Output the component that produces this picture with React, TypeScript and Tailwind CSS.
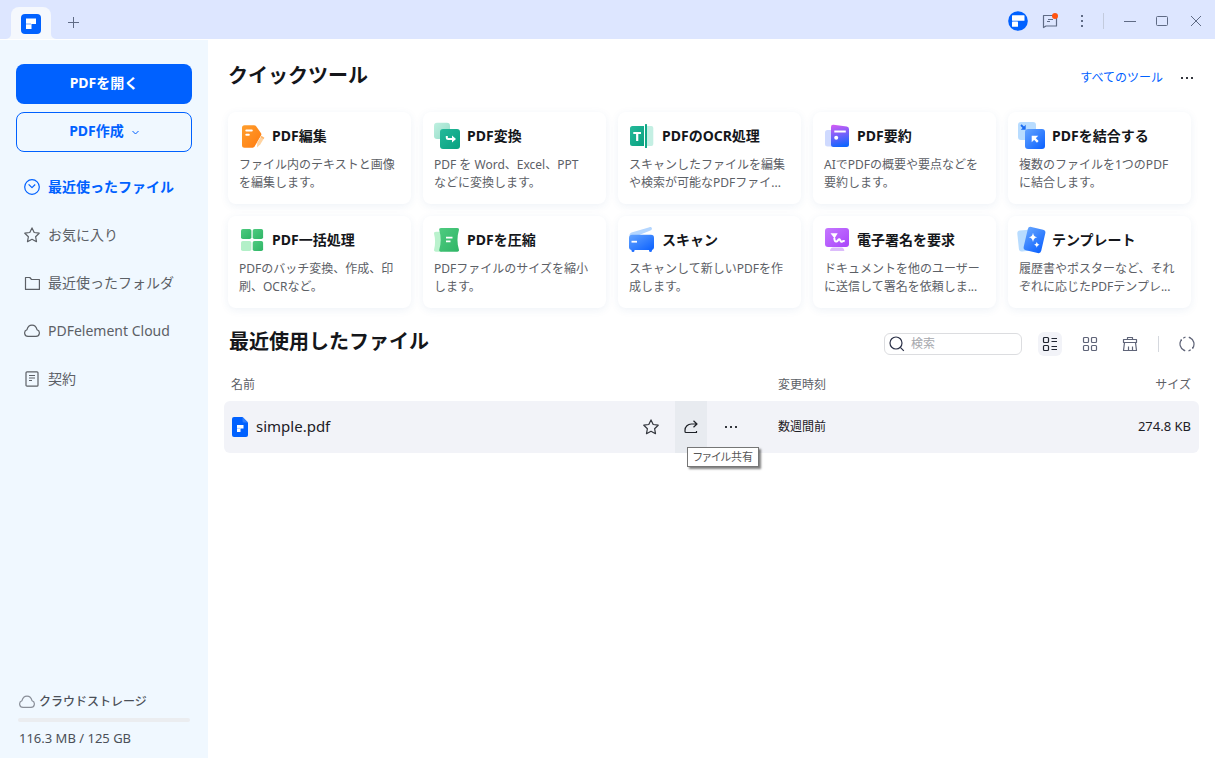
import type { ReactNode } from 'react';

type IconProps = { className?: string };

/* ---------- brand marks ---------- */

function BrandMark({ className }: IconProps) {
  return (
    <svg viewBox="0 0 20 20" className={className} aria-hidden>
      <rect width="20" height="20" rx="4" fill="#0061ff" />
      <path d="M5 4.5h10V10h-4.5v5H5z" fill="#fff" />
      <path d="M5 9h5v2H5z" fill="#b9d3ff" />
    </svg>
  );
}

function AvatarMark({ className }: IconProps) {
  return (
    <svg viewBox="0 0 20 20" className={className} aria-hidden>
      <circle cx="10" cy="10" r="9.8" fill="#0061ff" />
      <rect x="4" y="4.2" width="12.5" height="5.6" rx="0.6" fill="#fff" />
      <rect x="4" y="10.6" width="6" height="5.2" rx="0.6" fill="#fff" />
    </svg>
  );
}

function FileMark({ className }: IconProps) {
  return (
    <svg viewBox="0 0 16 20" className={className} aria-hidden>
      <path d="M2 0h8.5L16 5.5V18a2 2 0 0 1-2 2H2a2 2 0 0 1-2-2V2a2 2 0 0 1 2-2z" fill="#0061ff" />
      <path d="M10.5 0 16 5.5h-4a1.5 1.5 0 0 1-1.5-1.5z" fill="#2f7fff" />
      <path d="M5 8h6.5v3.500H8.500V15H5z" fill="#fff" />
      <path d="M5 10.800h3.500V12H5z" fill="#b9d3ff" />
    </svg>
  );
}

/* ---------- line icons ---------- */

function Line({ className, children }: IconProps & { children: ReactNode }) {
  return (
    <svg
      width="16"
      height="16"
      viewBox="0 0 16 16"
      fill="none"
      stroke="currentColor"
      strokeWidth="1.2"
      strokeLinejoin="round"
      className={`shrink-0 ${className ?? ''}`}
      aria-hidden
    >
      {children}
    </svg>
  );
}

const StarIcon = () => (
  <Line>
    <path d="M8 .9l2.200 4.600 5 .7-3.600 3.500.9 5L8 12.300l-4.500 2.400.9-5L.8 6.200l5-.7z" />
  </Line>
);

const CloudIcon = () => (
  <Line>
    <path d="M4 13.400a3.400 3.400 0 0 1-1.100-6.600C3.600 4 5.500 2.100 8 2.100s4.400 1.900 5.100 4.700A3.400 3.400 0 0 1 12 13.400z" />
  </Line>
);

const ClockIcon = () => (
  <Line>
    <circle cx="8" cy="8" r="7.3" />
    <path d="M4.600 5.300 8 8.700l3.200-3.200" />
  </Line>
);

const FolderIcon = () => (
  <Line>
    <path d="M1.500 2.500h4.300l1.700 2h7.900v9.900H1.500z" />
  </Line>
);

const ContractIcon = () => (
  <Line>
    <rect x="2" y="0.8" width="12" height="14.4" rx="1" />
    <path d="M5 4.500h6M5 7h6M5 9.500h3" strokeWidth="1" />
  </Line>
);

const DotsIcon = ({ className }: IconProps) => (
  <svg width="16" height="16" viewBox="0 0 16 16" fill="currentColor" className={className} aria-hidden>
    <path d="M2 7h2v2H2zM7 7h2v2H7zM12 7h2v2h-2z" />
  </svg>
);

/* ---------- tool icons ---------- */

function Art({ children }: { children: ReactNode }) {
  return (
    <svg width="28" height="28" viewBox="0 0 28 28" fill="none" className="shrink-0 overflow-visible" aria-hidden>
      {children}
    </svg>
  );
}

const Gradients = () => (
  <svg width="0" height="0" className="absolute" aria-hidden>
    <defs>
      <linearGradient id="g-orange" x1="0" y1="0" x2="1" y2="1">
        <stop stopColor="#ff9f2e" />
        <stop offset="1" stopColor="#ff7a0f" />
      </linearGradient>
      <linearGradient id="g-teal" x1="0" y1="0" x2="1" y2="1">
        <stop stopColor="#25b99a" />
        <stop offset="1" stopColor="#08a180" />
      </linearGradient>
      <linearGradient id="g-mint" x1="0" y1="0" x2="1" y2="1">
        <stop stopColor="#bff0e0" />
        <stop offset="1" stopColor="#93dcc8" />
      </linearGradient>
      <linearGradient id="g-green" x1="0" y1="0" x2="1" y2="1">
        <stop stopColor="#4fcb80" />
        <stop offset="1" stopColor="#2fb566" />
      </linearGradient>
      <linearGradient id="g-blue" x1="0" y1="0" x2="1" y2="1">
        <stop stopColor="#64a4ff" />
        <stop offset="1" stopColor="#0a60ff" />
      </linearGradient>
      <linearGradient id="g-ai" x1="0.3" y1="0" x2="0.5" y2="1">
        <stop stopColor="#cf5cf5" />
        <stop offset="1" stopColor="#0f66ff" />
      </linearGradient>
      <linearGradient id="g-purple" x1="0" y1="0" x2="1" y2="1">
        <stop stopColor="#c577ff" />
        <stop offset="1" stopColor="#a945fb" />
      </linearGradient>
    </defs>
  </svg>
);

const EditArt = () => (
  <Art>
    <path d="M5.500 3.300H15c1 0 1.700.4 2.300 1.200l4.600 6.400c.6.900.7 1.700.1 2.700l-6.400 11c-.5.800-1.100 1.100-2 1.100H5.500A2.500 2.500 0 0 1 3 23.200V5.800a2.500 2.500 0 0 1 2.500-2.500z" fill="url(#g-orange)" />
    <path d="M7.300 8.500h5.500M7.300 12.700h2.500" stroke="#fff" strokeWidth="2" strokeLinecap="round" />
    <path d="m18.300 20.500 3.700-6 3 1.800-3.600 6-3.400 3.200z" fill="#ffd3a1" />
    <path d="m22 14.500 3 1.800" stroke="#ffb568" strokeWidth="1.5" />
  </Art>
);

const ConvertArt = () => (
  <Art>
    <rect y="0.7" width="16" height="16.3" rx="3" fill="url(#g-mint)" />
    <rect x="6" y="7" width="20" height="20" rx="3" fill="url(#g-teal)" />
    <path d="M12.800 14v1.500c0 1 .5 1.500 1.500 1.500h5.200" stroke="#fff" strokeWidth="2" />
    <path d="m18 13.500 4 3.500-4 3.500z" fill="#fff" />
  </Art>
);

const OcrArt = () => (
  <Art>
    <path d="M3.500 4H15v20H3.500A2.500 2.500 0 0 1 1 21.500v-15A2.500 2.500 0 0 1 3.500 4z" fill="url(#g-teal)" />
    <path d="M18 4h4.300a2 2 0 0 1 2 2v16a2 2 0 0 1-2 2H18z" fill="#c4efe3" />
    <rect x="16" y="2" width="2" height="24" rx="0.5" fill="#10a987" />
    <path d="M4.300 11H12M8.200 11v8" stroke="#fff" strokeWidth="2.2" />
  </Art>
);

const SummaryArt = () => (
  <Art>
    <rect x="1" y="8" width="12" height="16.5" rx="2.5" fill="#cfdaff" />
    <path d="M9.600 2.700 22.700 4.500A2.600 2.600 0 0 1 25 7v15.500a2.500 2.500 0 0 1-2.500 2.500h-13A2.500 2.500 0 0 1 7 22.500V5a2.300 2.300 0 0 1 2.600-2.300z" fill="url(#g-ai)" />
    <path d="M10.300 9.500h11.500" stroke="#fff" strokeWidth="2" />
    <circle cx="12.2" cy="15.8" r="2" fill="#fff" />
  </Art>
);

const MergeArt = () => (
  <Art>
    <rect x="-1" width="18" height="18" rx="3" fill="#b8dcff" />
    <path d="m2 3 3.500 3.500" stroke="#1b6cf2" strokeWidth="1.8" />
    <path d="M6.700 2.800v4.900H1.800z" fill="#1b6cf2" />
    <rect x="6" y="7" width="20" height="20" rx="3" fill="url(#g-blue)" />
    <path d="m14.500 15.500 4.300 4.300" stroke="#fff" strokeWidth="2.4" />
    <path d="M12.700 20.300v-6.600h6.600z" fill="#fff" />
  </Art>
);

const BatchArt = () => (
  <Art>
    <rect x="2" y="3" width="10.4" height="10" rx="1.8" fill="url(#g-green)" />
    <rect x="13.7" y="3" width="10.4" height="10" rx="1.8" fill="url(#g-green)" />
    <rect x="2" y="15" width="10.4" height="10" rx="1.8" fill="#b3f0c8" />
    <rect x="13.7" y="15" width="10.4" height="10" rx="1.8" fill="url(#g-green)" />
  </Art>
);

const CompressArt = () => (
  <Art>
    <path d="M2 5.700h6v20H2c-1.500 0-2.200-.8-1.900-2.200 1.300-5 1.300-10.600 0-15.600C-.2 6.500.5 5.700 2 5.700z" fill="#baf2cd" />
    <path d="M7 2h16.200c1.400 0 2.100.8 1.700 2.200-1.900 6.500-1.900 12.800 0 19.300.4 1.400-.3 2.200-1.700 2.200H7c-1.400 0-2.100-.8-1.700-2.200 1.900-6.500 1.900-12.800 0-19.300C4.900 2.800 5.600 2 7 2z" fill="url(#g-green)" />
    <path d="M12 11.700h6.500M12 15.300h4.500" stroke="#fff" strokeWidth="1.8" />
  </Art>
);

const ScanArt = () => (
  <Art>
    <path d="M.5 9.500c0-1.500.6-2.500 2-3L20.500 1.200c2.200-.6 3.400 1.900 1.500 3L9 9.500z" fill="#b4d6ff" />
    <path d="M2 22h3.500v2.500a1.500 1.500 0 0 1-3 0zM20 22h3.500l-.5 2.500a1.500 1.500 0 0 1-3 0z" fill="#1e6dff" />
    <rect y="8.7" width="25" height="15.3" rx="3" fill="url(#g-blue)" />
    <path d="M2.500 15.700H8" stroke="#fff" strokeWidth="1.8" />
  </Art>
);

const SignArt = () => (
  <Art>
    <path d="M9 21.500h8.500c1.500 0 2.800 1.500 2.800 3.500H6c0-2 1.500-3.500 3-3.500z" fill="#dcbcfb" />
    <rect x="1" y="2" width="24" height="19" rx="3" fill="url(#g-purple)" />
    <path d="M6.500 7.200h7.200l-3.200 5.300z" fill="#fff" />
    <path d="M10.300 12c.2 3 .9 3.900 2.200 3.500 1.600-.5 1.700-2.600 2.900-2.200 1.200.4.800 2.400 2 2.500 1.200 0 1.200-1.200 3.300-.6" stroke="#fff" strokeWidth="2" />
  </Art>
);

const TemplateArt = () => (
  <Art>
    <rect x="-1" y="4" width="15" height="21" rx="3" transform="rotate(-6 7 14)" fill="#b8dcff" />
    <rect x="6.5" y="2" width="18" height="24" rx="3" transform="rotate(13 15.5 14)" fill="url(#g-blue)" />
    <path d="M14 6.700c.7 3 1.500 3.900 4.200 4.600-2.700.7-3.500 1.600-4.200 4.600-.7-3-1.500-3.900-4.200-4.600 2.700-.7 3.500-1.600 4.200-4.600zM17.800 15.700c.5 2 1 2.500 2.700 3-1.700.5-2.200 1-2.700 3-.5-2-1-2.500-2.700-3 1.700-.5 2.200-1 2.700-3z" fill="#fff" />
  </Art>
);

/* ---------- data ---------- */

const TOOLS = [
  { title: 'PDF編集', text: 'ファイル内のテキストと画像を編集します。', art: <EditArt /> },
  { title: 'PDF変換', text: 'PDF を Word、Excel、PPT\nなどに変換します。', art: <ConvertArt /> },
  { title: 'PDFのOCR処理', text: 'スキャンしたファイルを編集や検索が可能なPDFファイ...', art: <OcrArt /> },
  { title: 'PDF要約', text: 'AIでPDFの概要や要点などを要約します。', art: <SummaryArt /> },
  { title: 'PDFを結合する', text: '複数のファイルを1つのPDFに結合します。', art: <MergeArt /> },
  { title: 'PDF一括処理', text: 'PDFのバッチ変換、作成、印刷、OCRなど。', art: <BatchArt /> },
  { title: 'PDFを圧縮', text: 'PDFファイルのサイズを縮小します。', art: <CompressArt /> },
  { title: 'スキャン', text: 'スキャンして新しいPDFを作成します。', art: <ScanArt /> },
  { title: '電子署名を要求', text: 'ドキュメントを他のユーザーに送信して署名を依頼しま...', art: <SignArt /> },
  { title: 'テンプレート', text: '履歴書やポスターなど、それぞれに応じたPDFテンプレ...', art: <TemplateArt /> },
];

const NAV = [
  { label: '最近使ったファイル', icon: <ClockIcon />, active: true },
  { label: 'お気に入り', icon: <StarIcon /> },
  { label: '最近使ったフォルダ', icon: <FolderIcon /> },
  { label: 'PDFelement Cloud', icon: <CloudIcon /> },
  { label: '契約', icon: <ContractIcon /> },
];

/* ---------- layout ---------- */

function TitleBar() {
  return (
    <header className="flex h-10 items-stretch border-b border-white bg-[#dde6ff] text-[#5f6b85]">
      <div className="relative mt-[7px] ml-[11px] flex w-10 items-center justify-center rounded-t-lg bg-[#f5f8fd] pt-[2px]">
        <BrandMark className="h-5 w-5" />
        {/* flared feet of the active tab */}
        <svg viewBox="0 0 5 5" className="absolute bottom-0 -left-[5px] h-[5px] w-[5px]" aria-hidden>
          <path d="M5 0v5H0a5 5 0 0 0 5-5z" fill="#f5f8fd" />
        </svg>
        <svg viewBox="0 0 5 5" className="absolute -right-[5px] bottom-0 h-[5px] w-[5px]" aria-hidden>
          <path d="M0 0v5h5a5 5 0 0 1-5-5z" fill="#f5f8fd" />
        </svg>
      </div>
      <button type="button" aria-label="新しいタブ" className="mt-[6px] ml-[15px] flex w-4 items-center justify-center">
        <svg width="12" height="12" viewBox="0 0 12 12" stroke="currentColor" aria-hidden>
          <path d="M5.500 0v11M0 5.500h11" />
        </svg>
      </button>

      <div className="ml-auto flex items-center gap-3 pt-[2px] pr-[3px]">
        <button type="button" aria-label="アカウント">
          <AvatarMark className="h-5 w-5" />
        </button>
        <button type="button" aria-label="メッセージ" className="flex w-5 justify-center">
          <svg width="18" height="18" viewBox="0 0 18 18" fill="none" className="overflow-visible" aria-hidden>
            <path d="M2.500 3.500h13v10.500H5l-2.500 1.500z" stroke="currentColor" strokeWidth="1.2" strokeLinejoin="round" />
            <path d="M7 7.500h5M6 9.500h3" stroke="currentColor" />
            <circle cx="14" cy="4" r="3" fill="#ff5310" />
          </svg>
        </button>
        <button type="button" aria-label="メニュー" className="flex w-5 justify-center">
          <DotsIcon className="rotate-90" />
        </button>
        <span className="-ml-px h-4 w-px bg-[#c3cbdd]" />
        <button type="button" aria-label="最小化" className="flex w-7 justify-center">
          <svg width="12" height="12" viewBox="0 0 12 12" stroke="currentColor" aria-hidden>
            <path d="M0 6.500h12" />
          </svg>
        </button>
        <button type="button" aria-label="最大化" className="flex w-3 justify-center">
          <svg width="14" height="12" viewBox="0 0 14 12" fill="none" stroke="currentColor" className="shrink-0 overflow-visible" aria-hidden>
            <rect x="1.5" y="1.5" width="11" height="9" rx="1" />
          </svg>
        </button>
        <button type="button" aria-label="閉じる" className="flex w-8 justify-center">
          <svg width="12" height="12" viewBox="0 0 12 12" stroke="currentColor" aria-hidden>
            <path d="m1 1 10 10M11 1 1 11" />
          </svg>
        </button>
      </div>
    </header>
  );
}

function Sidebar() {
  return (
    <aside className="flex w-52 shrink-0 flex-col bg-[#f0f8ff] px-4 pt-6 pb-3">
      <button type="button" className="h-10 rounded-lg bg-[#0061ff] pb-[2px] text-sm font-bold text-white">
        PDFを開く
      </button>
      <button
        type="button"
        className="mt-2 flex h-10 items-center justify-center gap-2 rounded-lg border border-[#0061ff] pb-[2px] text-sm font-bold text-[#0061ff]"
      >
        PDF作成
        <svg width="7" height="5" viewBox="0 0 7 5" fill="none" stroke="currentColor" className="mt-[2px]" aria-hidden>
          <path d="m.5 1 3 3 3-3" />
        </svg>
      </button>

      <nav className="mt-[11px]">
        <ul>
          {NAV.map((item) => (
            <li key={item.label}>
              <a
                href="#"
                className={
                  item.active
                    ? 'flex h-12 items-center gap-2 px-2 text-sm font-bold text-[#0061ff]'
                    : 'flex h-12 items-center gap-2 px-2 text-sm text-[#5c6066]'
                }
              >
                {item.icon}
                {item.label}
              </a>
            </li>
          ))}
        </ul>
      </nav>

      <div className="mt-auto text-[#4b5058]">
        <div className="flex items-center gap-1 px-[3px] text-xs font-medium">
          <span className="text-[#8a8f99]">
            <CloudIcon />
          </span>
          クラウドストレージ
        </div>
        <div className="mx-[2px] mt-2 h-1 rounded-full bg-[#ebedf0]" />
        <p className="mt-2 px-[3px] text-[13px] leading-4">116.3 MB / 125 GB</p>
      </div>
    </aside>
  );
}

function QuickTools() {
  return (
    <section className="pr-6 pl-5">
      <div className="flex items-center">
        <h2 className="text-xl font-bold">クイックツール</h2>
        <a href="#" className="mt-1 ml-auto text-xs text-[#0061ff]">
          すべてのツール
        </a>
        <button type="button" aria-label="その他のツール" className="mt-1 ml-4 -mr-1 text-[#33363d]">
          <DotsIcon />
        </button>
      </div>
      <ul className="mt-[22px] grid grid-cols-5 gap-3">
        {TOOLS.map((tool) => (
          <li key={tool.title}>
            <button
              type="button"
              className="flex h-[92px] w-full flex-col rounded-lg bg-white px-[11px] pt-[10px] text-left shadow-[0_2px_8px_rgba(40,90,150,0.08)]"
            >
              <span className="flex h-7 items-center gap-[5px] text-sm font-bold">
                {tool.art}
                {tool.title}
              </span>
              <span className="mt-[6px] text-xs leading-[18px] whitespace-pre-line text-[#5c6066]">{tool.text}</span>
            </button>
          </li>
        ))}
      </ul>
    </section>
  );
}

function ListToolbar() {
  return (
    <div className="ml-auto flex items-center text-[#5f6478]">
      <label className="flex h-[22px] w-[138px] items-center gap-1 rounded-md border border-[#dcdde0] bg-white pl-1">
        <Line className="text-[#2b3047]">
          <circle cx="7" cy="7" r="6" />
          <path d="m11.300 11.300 3.500 3.500" />
        </Line>
        <input
          type="search"
          aria-label="検索"
          placeholder="検索"
          className="w-full min-w-0 bg-transparent pl-[2px] text-xs outline-none placeholder:text-[#a6a8ad]"
        />
      </label>
      <button type="button" aria-label="リスト表示" className="ml-4 flex h-6 w-6 items-center justify-center rounded-md bg-[#f2f3f8] text-[#1f2430]">
        <Line>
          <rect x="1.5" y="1.5" width="5" height="5" rx="1" />
          <rect x="1.5" y="9.5" width="5" height="5" rx="1" />
          <path d="M9.500 2.500H15M9.500 5.500H15M9.500 10.500H15M9.500 13.500H15" />
        </Line>
      </button>
      <button type="button" aria-label="グリッド表示" className="ml-4 flex h-6 w-6 items-center justify-center">
        <Line>
          <rect x="1.5" y="1.5" width="5" height="5" rx="1" />
          <rect x="1.5" y="9.5" width="5" height="5" rx="1" />
          <rect x="9.5" y="1.5" width="5" height="5" rx="1" />
          <rect x="9.5" y="9.5" width="5" height="5" rx="1" />
        </Line>
      </button>
      <button type="button" aria-label="履歴を消去" className="ml-4 flex h-6 w-6 items-center justify-center">
        <Line>
          <path d="M1.500 6.500v-3h13v3zM5.500 3.500v-2h5v2M2.500 6.500l-1 8h13l-1-8M6.500 14.500v-4M10.500 14.500v-4" />
        </Line>
      </button>
      <span className="ml-4 h-4 w-px bg-[#d5d8de]" />
      <button type="button" aria-label="更新" className="ml-4 flex h-6 w-6 items-center justify-center">
        <Line>
          <path d="M5.200 14.400A7 7 0 0 1 2.400 3.800M4.300 2.200A7 7 0 0 1 6.500 1.200M10.800 1.600a7 7 0 0 1 2.800 10.600M11.700 13.800a7 7 0 0 1-2.200 1" />
          <path d="M2.200 3.200l.2 1.800M13.800 12.800l-.2-1.800M9.800 1l1.400 1M6.200 15l-1.400-1" />
        </Line>
      </button>
    </div>
  );
}

function RecentFiles() {
  return (
    <section className="mt-6 px-4">
      <div className="flex items-center pl-[5px]">
        <h2 className="-mt-1 text-xl font-bold">最近使用したファイル</h2>
        <ListToolbar />
      </div>
      <table className="mt-[13px] w-full table-fixed border-separate border-spacing-0 text-left text-xs">
        <colgroup>
          <col />
          <col className="w-[200px]" />
          <col className="w-[221px]" />
        </colgroup>
        <thead className="text-[#5c6066]">
          <tr className="h-8">
            <th className="pl-[7px] font-normal">名前</th>
            <th className="font-normal">変更時刻</th>
            <th className="pr-2 text-right font-normal">サイズ</th>
          </tr>
        </thead>
        <tbody>
          <tr className="h-[52px] bg-[#f2f3f8]">
            <td className="rounded-l-md p-0">
              <div className="flex h-[52px] items-center pr-[31px] pl-2">
                <FileMark className="h-5 w-4 shrink-0" />
                <a href="#" className="ml-2 flex-1 pb-[2px] text-[15px] text-[#1d2026]">
                  simple.pdf
                </a>
                <button type="button" aria-label="お気に入りに追加" className="flex h-full w-8 items-center justify-center text-[#33363d]">
                  <StarIcon />
                </button>
                <div className="relative ml-2 h-full">
                  <button
                    type="button"
                    aria-describedby="share-tip"
                    aria-label="共有"
                    className="flex h-full w-8 items-center justify-center bg-[#e8ebf0] text-[#1d2026]"
                  >
                    <Line>
                      <path d="M10.500 1.800 14 5l-3.500 3.200M13.800 5H8.500A6.300 6.300 0 0 0 2 11.300v1.200c0 .7.300 1 1 1h10.500V12" />
                    </Line>
                  </button>
                  <span
                    id="share-tip"
                    role="tooltip"
                    className="absolute top-[46px] left-3 flex h-5 items-center border border-[#767676] bg-white px-[5px] text-[11px] whitespace-nowrap text-[#575757] shadow-[2px_2px_2px_rgba(0,0,0,0.5)] [font-feature-settings:'palt']"
                  >
                    ファイル共有
                  </span>
                </div>
                <button type="button" aria-label="その他" className="ml-2 flex h-full w-8 items-center justify-center text-[#33363d]">
                  <DotsIcon />
                </button>
              </div>
            </td>
            <td className="text-[#1d2026]">数週間前</td>
            <td className="rounded-r-md pr-2 text-right text-[13px] text-[#1d2026]">274.8 KB</td>
          </tr>
        </tbody>
      </table>
    </section>
  );
}

export default function App() {
  return (
    <div
      lang="ja"
      className="flex min-h-screen flex-col bg-white font-['Noto_Sans','Noto_Sans_CJK_JP',sans-serif] text-[#14161a]"
    >
      <Gradients />
      <TitleBar />
      <div className="flex flex-1">
        <Sidebar />
        <main className="min-w-0 flex-1 pt-[22px]">
          <QuickTools />
          <RecentFiles />
        </main>
      </div>
    </div>
  );
}
